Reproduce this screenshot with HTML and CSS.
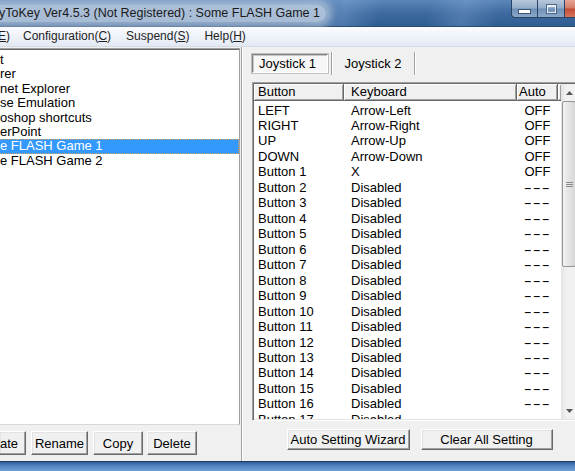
FILE: index.html
```html
<!DOCTYPE html>
<html>
<head>
<meta charset="utf-8">
<link rel="stylesheet" href="styles.css">
</head>
<body>
<div class="window">
  <div class="titlebar">
    <div class="title"><span class="title-text">yToKey Ver4.5.3 (Not Registered) : Some FLASH Game 1</span></div>
    <div class="caption-btns">
      <div class="cbtn cmin"><span class="min-glyph"></span></div>
      <div class="cbtn cmax"><span class="max-glyph"></span></div>
      <div class="cbtn cclose"></div>
    </div>
  </div>
  <div class="menubar">
    <span class="mi mi-first"><u>E</u>)</span>
    <span class="mi">Configuration(<u>C</u>)</span>
    <span class="mi">Suspend(<u>S</u>)</span>
    <span class="mi">Help(<u>H</u>)</span>
  </div>
  <div class="client">
    <div class="left">
      <div class="listbox">
        <div class="li">t</div>
        <div class="li">rer</div>
        <div class="li">net Explorer</div>
        <div class="li">se Emulation</div>
        <div class="li">oshop shortcuts</div>
        <div class="li">erPoint</div>
        <div class="li sel">e FLASH Game 1</div>
        <div class="li">e FLASH Game 2</div>
      </div>
      <div class="btnrow">
        <div class="btn btn-cut">ate</div>
        <div class="btn b-rename">Rename</div>
        <div class="btn b-copy">Copy</div>
        <div class="btn b-delete">Delete</div>
      </div>
    </div>
    <div class="splitter"></div>
    <div class="right">
      <div class="tabs">
        <div class="tab tab-active">Joystick 1</div>
        <div class="tab tab-other">Joystick 2</div>
      </div>
      <div class="listview">
        <div class="lv-main">
          <div class="lv-head">
            <div class="hc c1">Button</div>
            <div class="hc c2">Keyboard</div>
            <div class="hc c3">Auto</div>
            <div class="hc c4"></div>
          </div>
          <div class="lv-rows">
            <div class="row"><span class="c1">LEFT</span><span class="c2">Arrow-Left</span><span class="c3">OFF</span></div>
            <div class="row"><span class="c1">RIGHT</span><span class="c2">Arrow-Right</span><span class="c3">OFF</span></div>
            <div class="row"><span class="c1">UP</span><span class="c2">Arrow-Up</span><span class="c3">OFF</span></div>
            <div class="row"><span class="c1">DOWN</span><span class="c2">Arrow-Down</span><span class="c3">OFF</span></div>
            <div class="row"><span class="c1">Button 1</span><span class="c2">X</span><span class="c3">OFF</span></div>
            <div class="row"><span class="c1">Button 2</span><span class="c2">Disabled</span><span class="c3"><span class="dash">---</span></span></div>
            <div class="row"><span class="c1">Button 3</span><span class="c2">Disabled</span><span class="c3"><span class="dash">---</span></span></div>
            <div class="row"><span class="c1">Button 4</span><span class="c2">Disabled</span><span class="c3"><span class="dash">---</span></span></div>
            <div class="row"><span class="c1">Button 5</span><span class="c2">Disabled</span><span class="c3"><span class="dash">---</span></span></div>
            <div class="row"><span class="c1">Button 6</span><span class="c2">Disabled</span><span class="c3"><span class="dash">---</span></span></div>
            <div class="row"><span class="c1">Button 7</span><span class="c2">Disabled</span><span class="c3"><span class="dash">---</span></span></div>
            <div class="row"><span class="c1">Button 8</span><span class="c2">Disabled</span><span class="c3"><span class="dash">---</span></span></div>
            <div class="row"><span class="c1">Button 9</span><span class="c2">Disabled</span><span class="c3"><span class="dash">---</span></span></div>
            <div class="row"><span class="c1">Button 10</span><span class="c2">Disabled</span><span class="c3"><span class="dash">---</span></span></div>
            <div class="row"><span class="c1">Button 11</span><span class="c2">Disabled</span><span class="c3"><span class="dash">---</span></span></div>
            <div class="row"><span class="c1">Button 12</span><span class="c2">Disabled</span><span class="c3"><span class="dash">---</span></span></div>
            <div class="row"><span class="c1">Button 13</span><span class="c2">Disabled</span><span class="c3"><span class="dash">---</span></span></div>
            <div class="row"><span class="c1">Button 14</span><span class="c2">Disabled</span><span class="c3"><span class="dash">---</span></span></div>
            <div class="row"><span class="c1">Button 15</span><span class="c2">Disabled</span><span class="c3"><span class="dash">---</span></span></div>
            <div class="row"><span class="c1">Button 16</span><span class="c2">Disabled</span><span class="c3"><span class="dash">---</span></span></div>
            <div class="row"><span class="c1">Button 17</span><span class="c2">Disabled</span><span class="c3"><span class="dash">---</span></span></div>
          </div>
        </div>
        <div class="vscroll">
          <div class="sb-btn"><svg width="7" height="4" viewBox="0 0 7 4"><path d="M0 4 L3.5 0 L7 4 Z" fill="#555"/></svg></div>
          <div class="sb-track">
            <div class="sb-thumb"><svg width="7" height="7" viewBox="0 0 7 7"><path d="M0 1.5H7M0 3.5H7M0 5.5H7" stroke="#8a8a8a" stroke-width="1"/></svg></div>
          </div>
          <div class="sb-btn"><svg width="7" height="4" viewBox="0 0 7 4"><path d="M0 0 L3.5 4 L7 0 Z" fill="#555"/></svg></div>
        </div>
      </div>
      <div class="btnrow btnrow-right">
        <div class="btn b-wizard">Auto Setting Wizard</div>
        <div class="btn b-clear">Clear All Setting</div>
      </div>
    </div>
  </div>
  <div class="bottomframe"></div>
</div>
</body>
</html>
```
FILE: styles.css
```css
html, body {
  margin: 0;
  padding: 0;
}
body {
  width: 575px;
  height: 471px;
  overflow: hidden;
  background: #f0f0f0;
  font-family: "Liberation Sans", Arial, sans-serif;
  color: #000;
}
.window {
  width: 592px;
  height: 471px;
  display: flex;
  flex-direction: column;
}

/* ---------- title bar ---------- */
.titlebar {
  height: 26px;
  border-bottom: 1px solid #2b4a70;
  display: flex;
  justify-content: space-between;
  align-items: flex-start;
  background:
    linear-gradient(104deg, rgba(255,255,255,0) 52%, rgba(140,175,220,0.35) 58%, rgba(255,255,255,0) 64%, rgba(255,255,255,0) 72%, rgba(140,175,220,0.3) 78%, rgba(255,255,255,0) 84%),
    linear-gradient(180deg, #5b86b8 0%, #3d6aa0 50%, #2f5d93 100%);
}
.title {
  height: 26px;
  display: flex;
  align-items: center;
}
.title-text {
  font-size: 12.5px;
  color: #1a1a1a;
  margin-left: -1px;
  padding: 1px 6px 1px 0;
  background: rgba(196, 210, 228, 0.8);
  border-radius: 0 10px 10px 0;
  box-shadow: 0 0 9px 6px rgba(196, 210, 228, 0.7);
  line-height: 15px;
}
.caption-btns {
  display: flex;
  height: 18px;
}
.cbtn {
  height: 17px;
  border: 1px solid #2a4263;
  border-top: none;
  display: flex;
  align-items: center;
  justify-content: center;
}
.cmin {
  width: 25px;
  border-radius: 0 0 0 4px;
  background: linear-gradient(180deg, #b7c8dc 0%, #93acc9 48%, #6f8fb5 52%, #8aa8cb 100%);
  border-right: none;
}
.cmax {
  width: 26px;
  background: linear-gradient(180deg, #b7c8dc 0%, #93acc9 48%, #6f8fb5 52%, #8aa8cb 100%);
  border-right: none;
}
.cclose {
  width: 26px;
  background: linear-gradient(180deg, #e6a596 0%, #d47b68 48%, #c24a32 52%, #d8745c 100%);
}
.min-glyph {
  width: 11px;
  height: 3px;
  margin-top: 6px;
  background: #fff;
  border: 1px solid #3c5679;
}
.max-glyph {
  width: 7px;
  height: 5px;
  border: 1px solid #fff;
  border-top-width: 2px;
  outline: 1px solid #3c5679;
  opacity: 0.8;
}

/* ---------- menu bar ---------- */
.menubar {
  height: 19px;
  border-bottom: 1px solid #d6dbe6;
  background: linear-gradient(180deg, #fbfcfe 0%, #eef2f9 50%, #e3e9f4 100%);
  display: flex;
  align-items: center;
  gap: 15px;
  font-size: 12px;
  color: #1e1e1e;
}
.mi {
  line-height: 19px;
}
.mi-first {
  margin-left: -2px;
  margin-right: -2px;
}
.mi u {
  text-decoration-thickness: 1px;
  text-underline-offset: 1px;
}

/* ---------- client ---------- */
.client {
  flex: 1;
  display: flex;
  background: #f0f0f0;
  font-size: 13px;
}
.left {
  width: 240px;
  display: flex;
  flex-direction: column;
}
.listbox {
  margin-top: 1px;
  height: 371px;
  background: #fff;
  border-top: 1px solid #a0a0a0;
  border-right: 1px solid #a0a0a0;
  border-bottom: 1px solid #d8d8d8;
  padding-top: 4px;
  box-shadow: inset 0 1px 0 #696969;
}
.li {
  height: 14.4px;
  line-height: 14.4px;
  white-space: nowrap;
  box-sizing: border-box;
}
.li.sel {
  background: #3399ff;
  color: #fff;
  outline: 1px dotted #d9a066;
  outline-offset: -1px;
  margin-left: -1px;
  padding-left: 1px;
}
.btnrow {
  display: flex;
  gap: 5px;
  margin-top: 6px;
}
.btn {
  box-sizing: border-box;
  height: 24px;
  display: flex;
  align-items: center;
  justify-content: center;
  background: #f0f0f0;
  border: 1px solid;
  border-color: #ffffff #696969 #696969 #ffffff;
  box-shadow: inset -1px -1px 0 #a0a0a0, inset 1px 1px 0 #e3e3e3;
  white-space: nowrap;
}
.btn-cut {
  width: 26px;
  border-left: none;
  justify-content: flex-start;
}
.b-rename { width: 57px; }
.b-copy { width: 50px; }
.b-delete { width: 50px; margin-left: -1px; }

.splitter {
  width: 5px;
  box-sizing: border-box;
  background: linear-gradient(90deg, #f0f0f0 0, #f0f0f0 1px, #a0a0a0 1px, #a0a0a0 2px, #ffffff 2px, #ffffff 3px, #f0f0f0 3px);
}

/* ---------- right pane ---------- */
.right {
  width: 345px;
  padding: 7px 0 0 7px;
  box-sizing: border-box;
  display: flex;
  flex-direction: column;
}
.tabs {
  display: flex;
  height: 19px;
  align-items: stretch;
}
.tab {
  box-sizing: border-box;
  display: flex;
  align-items: center;
  white-space: nowrap;
}
.tab-active {
  width: 76px;
  padding-left: 6px;
  background: #f7f7f7;
  border: 1px solid;
  border-color: #808080 #ffffff #ffffff #808080;
  box-shadow: inset 1px 1px 0 #c8c8c8;
  outline: 1px solid #c0c0c0;
}
.tab-other {
  margin-left: 3px;
  width: 84px;
  justify-content: center;
  margin-top: -2px;
  margin-bottom: -2px;
  border-left: 1px solid #a0a0a0;
  border-right: 1px solid #a0a0a0;
  box-shadow: inset 1px 0 0 #fff, 1px 0 0 #fff;
}
.listview {
  margin-top: 9px;
  width: 328px;
  height: 339px;
  box-sizing: border-box;
  border: 1px solid;
  border-color: #a0a0a0 #ffffff #ffffff #a0a0a0;
  box-shadow: inset 1px 1px 0 #696969, inset -1px -1px 0 #e3e3e3;
  padding: 1px;
  background: #fff;
  display: flex;
}
.lv-main {
  flex: 1;
  overflow: hidden;
  display: flex;
  flex-direction: column;
}
.lv-head {
  height: 17px;
  display: flex;
  flex: none;
}
.hc {
  box-sizing: border-box;
  height: 17px;
  line-height: 16px;
  background: #f0f0f0;
  border-right: 1px solid #696969;
  border-bottom: 1px solid #696969;
  box-shadow: inset 1px 1px 0 #ffffff, inset -1px -1px 0 #a0a0a0;
  white-space: nowrap;
}
.hc.c1 { width: 90px; padding-left: 4px; }
.hc.c2 { width: 173px; padding-left: 7px; }
.hc.c3 { width: 41px; padding-left: 2px; }
.hc.c4 { flex: 1; border-right: none; }
.lv-rows {
  padding-top: 1.5px;
}
.row {
  height: 15.47px;
  line-height: 15.47px;
  display: flex;
  white-space: nowrap;
}
.row .c1 { width: 90px; padding-left: 4px; box-sizing: border-box; }
.row .c2 { width: 173px; padding-left: 7px; box-sizing: border-box; }
.row .c3 { width: 41px; text-align: center; }
.dash {
  display: inline-block;
  transform: scaleX(1.85);
  letter-spacing: 0.5px;
}

.vscroll {
  width: 17px;
  display: flex;
  flex-direction: column;
  background: linear-gradient(90deg, #e3e3e3 0%, #f1f1f1 30%, #f1f1f1 100%);
}
.sb-btn {
  height: 17px;
  display: flex;
  align-items: center;
  justify-content: center;
  flex: none;
}
.sb-track {
  flex: 1;
}
.sb-thumb {
  margin-left: 1px;
  width: 14px;
  height: 166px;
  box-sizing: border-box;
  border: 1px solid #979797;
  border-radius: 2px;
  background: linear-gradient(90deg, #f2f2f2 0%, #e4e4e4 50%, #d6d6d6 100%);
  display: flex;
  align-items: center;
  justify-content: center;
}
.btnrow-right {
  margin-top: 8px;
  gap: 11px;
  justify-content: center;
  width: 335px;
}
.btnrow-right .btn {
  height: 21px;
}
.b-wizard { width: 123px; }
.b-clear { width: 132px; }

/* ---------- bottom frame ---------- */
.bottomframe {
  height: 10px;
  box-sizing: border-box;
  border-top: 1px solid #1d3c62;
  background: linear-gradient(180deg, #2e5d96 0%, #4f82bf 40%, #6f9fd6 100%);
}
```
